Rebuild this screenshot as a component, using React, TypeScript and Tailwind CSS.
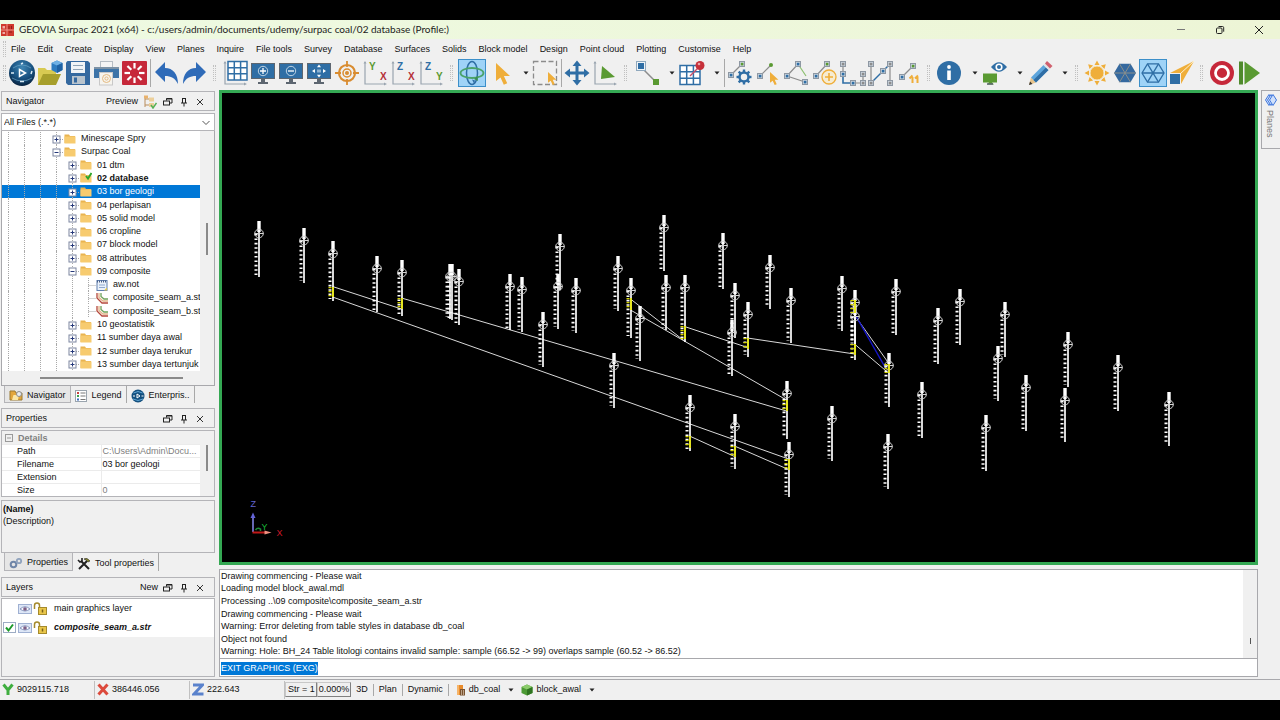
import { Fragment, type ReactNode } from "react";

const BLUE = "#2f6ea5";
const GREEN = "#5a9a32";
const GOLD = "#efae3a";
const GREY = "#8c8c8c";

const Icon = ({ children }: { children: ReactNode }) => (
  <svg viewBox="0 0 28 28" className="h-7 w-7 shrink-0" fill="none">
    {children}
  </svg>
);

const Node = ({ x, y, color = BLUE }: { x: number; y: number; color?: string }) => (
  <>
    <rect x={x - 2.5} y={y - 2.5} width="5" height="5" fill="#c9d3dc" stroke="#8e98a3" />
    <rect x={x - 1.2} y={y - 1.2} width="2.6" height="2.6" fill={color} />
  </>
);

const Cursor = ({ x, y, s = 1 }: { x: number; y: number; s?: number }) => (
  <path
    transform={`translate(${x} ${y}) scale(${s})`}
    d="M0 0v18l4.5-3.6 3.3 7.4 3.4-1.5-3.3-7.2H14z"
    fill={GOLD}
  />
);

const Axes = () => (
  <>
    <path d="M4 3v22h20" stroke="#9aa5b0" strokeWidth="1.2" />
    <path d="M2.5 4.5L4 2l1.5 2.5zM23 23.5l3 1.5-3 1.5z" fill="#9aa5b0" />
  </>
);

const AxisPair = ({ a, ac, b, bc }: { a: string; ac: string; b: string; bc: string }) => (
  <Icon>
    <Axes />
    <text x="8" y="11" fontSize="10" fontWeight="bold" fill={ac}>{a}</text>
    <text x="19" y="21" fontSize="10" fontWeight="bold" fill={bc}>{b}</text>
  </Icon>
);

const Monitor = ({ children }: { children: ReactNode }) => (
  <Icon>
    <rect x="2.5" y="4.5" width="23" height="15" fill={BLUE} stroke="#5d6670" />
    <path d="M12 20h4v3h3v2H9v-2h3z" fill="#5d6670" />
    {children}
  </Icon>
);

const HEX = "M3 14L8.500 4.800H19.500L25 14 19.500 23.200H8.500z";
const SPOKES = "M3 14H25M8.500 4.800L19.500 23.200M19.500 4.800L8.500 23.200";
const ANGLES = [0, 45, 90, 135, 180, 225, 270, 315];

const icons: Record<string, ReactNode> = {
  Start: (
    <Icon>
      <defs>
        <radialGradient id="globe" cx="0.5" cy="0.3" r="0.7">
          <stop offset="0" stopColor="#3f86b4" />
          <stop offset="0.6" stopColor="#17507f" />
          <stop offset="1" stopColor="#08233f" />
        </radialGradient>
      </defs>
      <circle cx="14" cy="14" r="13" fill="url(#globe)" />
      <path d="M5 9q9-6 18 0M4 19q10 6 20 0" stroke="#6ba6c9" strokeWidth="0.7" />
      <path d="M11.500 10.500l6 3.500-6 3.500z" stroke="#fff" strokeWidth="1.5" />
      <path d="M3 14h3M23 15l1-3M13 5l2-1M12 22.500h4" stroke="#dcecf5" strokeWidth="1.5" />
    </Icon>
  ),
  Open: (
    <Icon>
      <path d="M2 26V9h7l2 2h9v15z" fill="#d8ca52" />
      <path d="M2 26l5-11h18l-5 11z" fill="#a79f2c" />
      <path d="M21 1.500l5.500 2.500v7L21 14l-5.500-3V4z" fill="#2f7cc0" />
      <path d="M15.500 4L21 6.500 26.500 4 21 1.500z" fill="#6fb0e4" />
      <path d="M21 6.500V14l5.500-3V4z" fill="#1f62a4" />
    </Icon>
  ),
  Save: (
    <Icon>
      <path d="M2 3.500L3.500 2H24l2 2v22H4l-2-2z" fill="#35699f" />
      <rect x="7" y="3" width="14" height="11" fill="#f1f4f6" />
      <path d="M9 6.500h10M9 10.500h10" stroke="#8fa3b5" />
      <rect x="8" y="17" width="13" height="8" fill="#b9c4cd" />
      <rect x="10" y="18.500" width="3" height="5" fill="#35699f" />
    </Icon>
  ),
  Print: (
    <Icon>
      <rect x="8.500" y="2.500" width="12" height="7" fill="#f4f4f4" stroke="#b5bcc3" />
      <path d="M2 9h25v10H2z" fill="#3d74a8" />
      <path d="M2 8h25v2H2z" fill="#7d92a5" />
      <rect x="7.500" y="13.500" width="13" height="12.500" fill="#f6f4ee" stroke="#c8c8c8" />
      <circle cx="14.500" cy="19.500" r="4" stroke="#e3b980" />
      <circle cx="14.500" cy="19.500" r="1.600" stroke="#e3b980" />
    </Icon>
  ),
  Reset: (
    <Icon>
      <rect x="2" y="2" width="25" height="24" rx="1" fill="#c6283a" />
      {ANGLES.map((a) => (
        <path key={a} d="M14.500 9.500V4" transform={`rotate(${a} 14.500 14)`} stroke="#fff" strokeWidth="2.2" />
      ))}
    </Icon>
  ),
  Undo: (
    <Icon>
      <path d="M3 13L13 3v6c8 0 13 6 13 16-3-6-7-8-13-8v6z" fill="#2f6bb8" />
    </Icon>
  ),
  Redo: (
    <Icon>
      <path d="M26 13L16 3v6C8 9 3 15 3 25c3-6 7-8 13-8v6z" fill="#2f6bb8" />
    </Icon>
  ),
  "Toggle grid": (
    <Icon>
      <Axes />
      <rect x="7" y="2.500" width="19" height="18.500" fill="#fff" stroke={BLUE} strokeWidth="1.5" />
      <path d="M13.300 2v19M19.600 2v19M7 8.700h19M7 14.800h19" stroke={BLUE} strokeWidth="1.5" />
    </Icon>
  ),
  "Zoom in": (
    <Monitor>
      <circle cx="14" cy="12" r="4.700" stroke="#bcd2e4" />
      <path d="M14 9v6M11 12h6" stroke="#fff" strokeWidth="1.3" />
    </Monitor>
  ),
  "Zoom out": (
    <Monitor>
      <circle cx="14" cy="12" r="4.700" stroke="#bcd2e4" />
      <path d="M11 12h6" stroke="#fff" strokeWidth="1.3" />
    </Monitor>
  ),
  "Zoom all": (
    <Monitor>
      <path d="M14 5.500l2 2.700h-4zM14 18.500l2-2.700h-4zM7 12l3-2v4zM21 12l-3-2v4z" fill="#fff" />
      <rect x="12" y="10.500" width="4" height="3" fill="#8fb3d1" />
    </Monitor>
  ),
  Centre: (
    <Icon>
      <circle cx="14" cy="14" r="8" stroke="#d98c30" strokeWidth="2.2" />
      <circle cx="14" cy="14" r="4" stroke="#d98c30" strokeWidth="1.500" />
      <circle cx="14" cy="14" r="2" fill="#d98c30" />
      <path d="M14 2v6M14 20v6M2 14h6M20 14h6" stroke="#d98c30" strokeWidth="1.8" />
    </Icon>
  ),
  "Plan view": <AxisPair a="Y" ac={GREEN} b="X" bc="#b5303a" />,
  "Section view": <AxisPair a="Z" ac={BLUE} b="X" bc="#b5303a" />,
  "Long section view": <AxisPair a="Z" ac={BLUE} b="Y" bc={GREEN} />,
  Orbit: (
    <Icon>
      <ellipse cx="14" cy="14" rx="5.500" ry="11.500" stroke={BLUE} strokeWidth="1.5" />
      <ellipse cx="14" cy="14" rx="11.500" ry="5" stroke="#4ba36a" strokeWidth="1.8" />
      <path d="M19.500 17l-3.500 3 4 2z" fill="#3b8f52" />
      <path d="M14 20.500l3 1-1 3z" fill={BLUE} />
    </Icon>
  ),
  Select: (
    <Icon>
      <Cursor x={10} y={4} />
    </Icon>
  ),
  "Box select": (
    <Icon>
      <rect x="2.500" y="2.500" width="23" height="23" stroke={GREY} strokeWidth="1.300" strokeDasharray="5 2.500" />
      <Cursor x={17} y={13} s={0.6} />
    </Icon>
  ),
  Pan: (
    <Icon>
      <path
        d="M14 1.500l4.500 5.500h-3v5.500H21v-3l5.500 4.500-5.500 4.500v-3h-5.500V21h3L14 26.500 9.500 21h3v-5.500H7v3L1.500 14 7 9.500v3h5.500V7h-3z"
        fill={BLUE}
      />
    </Icon>
  ),
  Snap: (
    <Icon>
      <Axes />
      <path d="M11 7l13 11-14 2z" fill={GREEN} />
    </Icon>
  ),
  Digitise: (
    <Icon>
      <path d="M12 11l12 12" stroke={GREY} strokeWidth="1.5" />
      <rect x="4.500" y="2.500" width="9" height="9" fill="#eef4f8" stroke="#8fa8bd" />
      <rect x="6" y="4" width="6" height="6" fill={BLUE} />
      <rect x="21" y="20" width="6" height="6" fill={GREEN} />
    </Icon>
  ),
  "Pin grid": (
    <Icon>
      <rect x="3" y="6.500" width="20" height="19" fill="#fff" stroke={BLUE} strokeWidth="1.5" />
      <path d="M9.700 6v20M16.400 6v20M3 12.800h20M3 19.200h20" stroke={BLUE} strokeWidth="1.5" />
      <path d="M13 17l8-8" stroke="#c94d68" strokeWidth="1.5" />
      <circle cx="23" cy="6.500" r="4.500" fill="#c6303a" />
      <circle cx="22" cy="5" r="1.300" fill="#eaa0a5" />
    </Icon>
  ),
  "Line properties": (
    <Icon>
      <path d="M5 16L16 5" stroke={GREY} strokeWidth="1.200" />
      <Node x={5} y={16} />
      <Node x={16} y={5} color={GREEN} />
      <circle cx="18" cy="18" r="4.500" stroke={BLUE} strokeWidth="2.500" />
      {ANGLES.map((a) => (
        <path key={a} d="M18 13V10.500" transform={`rotate(${a} 18 18)`} stroke={BLUE} strokeWidth="2.400" />
      ))}
    </Icon>
  ),
  "Select point": (
    <Icon>
      <path d="M6 17L17 6" stroke={GREY} strokeWidth="1.200" />
      <Node x={6} y={17} />
      <circle cx="17" cy="6" r="2" fill={GREEN} />
      <Cursor x={16} y={13} s={0.6} />
    </Icon>
  ),
  "Close line": (
    <Icon>
      <path d="M23 23L5 17 16 5" stroke={GREY} strokeWidth="1.200" />
      <path d="M16 5l8 12" stroke="#8cc070" strokeWidth="1.200" />
      <Node x={16} y={5} />
      <Node x={5} y={17} />
      <Node x={23} y={23} />
    </Icon>
  ),
  "Add point": (
    <Icon>
      <path d="M6 17L17 5" stroke={GREY} strokeWidth="1.200" />
      <Node x={6} y={17} />
      <Node x={17} y={5} color={GREEN} />
      <circle cx="19" cy="18" r="7" fill="#f6ecd2" stroke={GOLD} strokeWidth="1.300" />
      <path d="M19 14v8M15 18h8" stroke={GOLD} strokeWidth="1.600" />
    </Icon>
  ),
  "Join segment": (
    <Icon>
      <path d="M5 5v10M15 24h10v-9" stroke={GREY} strokeWidth="1.200" />
      <path d="M5 15v9h10" stroke={BLUE} strokeWidth="1.600" />
      <Node x={5} y={5} color={GREY} />
      <Node x={5} y={15} />
      <Node x={15} y={24} />
      <Node x={25} y={24} color={GREY} />
      <Node x={25} y={15} color={GREY} />
    </Icon>
  ),
  "Break segment": (
    <Icon>
      <path d="M5 5v19M24 5v19" stroke={GREY} strokeWidth="1.200" />
      <path d="M5 24L24 5" stroke={BLUE} strokeWidth="1.500" />
      <Node x={5} y={5} color={GREY} />
      <Node x={5} y={24} color={GREY} />
      <Node x={17} y={12} />
      <Node x={24} y={5} color={GREY} />
      <Node x={24} y={24} color={GREY} />
    </Icon>
  ),
  Renumber: (
    <Icon>
      <path d="M8 18L19 7" stroke={GREY} strokeWidth="1.200" />
      <Node x={8} y={18} />
      <Node x={19} y={7} color={GREEN} />
      <path d="M18.500 24v-6M15.500 19.500l3-3M23.500 24v-6M21 19.500l3-3" stroke={GOLD} strokeWidth="2" />
    </Icon>
  ),
  Information: (
    <Icon>
      <circle cx="14" cy="14" r="12" fill={BLUE} />
      <circle cx="14" cy="8" r="1.900" fill="#fff" />
      <path d="M12.200 11.500h3.600V21h-3.600z" fill="#fff" />
    </Icon>
  ),
  "Display settings": (
    <Icon>
      <path d="M3 14.500h14v9h-5l2 2H7l2-2H3z" fill={GREEN} />
      <path d="M7 25h6" stroke="#5d6670" strokeWidth="1.500" />
      <path d="M11 8q8-9.500 16 0-8 9.500-16 0z" fill={BLUE} />
      <circle cx="19" cy="8" r="3.600" fill="#fff" />
      <circle cx="19" cy="8" r="2" fill={BLUE} />
    </Icon>
  ),
  Edit: (
    <Icon>
      <path d="M4 26l2-7.500 5 5z" fill="#e8c48c" />
      <path d="M4 26l1-3.500 2.500 2.500z" fill="#333" />
      <path d="M6 18.500L18.500 6l5 5L11 23.500z" fill="#5da5dc" />
      <path d="M8.500 21L21 8.500l2.500 2.500L11 23.500z" fill="#2f6ea5" />
      <path d="M18.500 6l1.500-1.500 5 5L23.500 11z" fill="#dfe3e6" />
      <path d="M20 4.500L22 2l5.500 5L25 9.500z" fill="#d0606e" />
    </Icon>
  ),
  Lighting: (
    <Icon>
      {ANGLES.map((a) => (
        <path key={a} d="M11.500 6L14 1.500 16.500 6z" transform={`rotate(${a} 14 14)`} fill={GOLD} />
      ))}
      <circle cx="14" cy="14" r="7" fill={GOLD} stroke="#f6e7c0" />
    </Icon>
  ),
  "Shaded faces": (
    <Icon>
      <path d={HEX} fill="#35699f" />
      <path d={SPOKES} stroke="#8a8f8c" />
    </Icon>
  ),
  "Wireframe faces": (
    <Icon>
      <path d={HEX} stroke={BLUE} strokeWidth="1.300" />
      <path d={SPOKES} stroke={BLUE} strokeWidth="1.300" />
    </Icon>
  ),
  Perspective: (
    <Icon>
      <path d="M3 14L27 2 14 25z" fill={GOLD} />
      <path d="M13 15L27 2" stroke="#fff3d0" />
      <rect x="2.500" y="14.500" width="11" height="11" fill="#2f6ea5" stroke="#f0f0f0" />
    </Icon>
  ),
  "Record macro": (
    <Icon>
      <circle cx="14" cy="14" r="12" fill="#c6283a" />
      <circle cx="14" cy="14" r="6.500" stroke="#fff" strokeWidth="2.800" />
    </Icon>
  ),
  "Run macro": (
    <Icon>
      <path d="M3 2.500h4v23H3z" fill="#4f8a2c" />
      <path d="M8.500 2.500L24 14 8.500 25.500z" fill={GREEN} />
    </Icon>
  ),
};

const toolbar = [
  "Start", "Open", "Save", "Print", "Reset", "|", "Undo", "Redo", ":",
  "Toggle grid", "Zoom in", "Zoom out", "Zoom all", "Centre", "Plan view", "Section view", "Long section view", ":",
  "Orbit", "Select", "v", "Box select", "|", "Pan", "Snap", ":",
  "Digitise", "v", "Pin grid", "v", "|",
  "Line properties", "Select point", "Close line", "Add point", "Join segment", "Break segment", "Renumber", ":",
  "Information", "v", "Display settings", "v", "Edit", "v", ":",
  "Lighting", "Shaded faces", "Wireframe faces", "Perspective", ":",
  "Record macro", "Run macro",
];

const Grip = () => <span className="h-4 w-[3px] border-x border-dotted border-[#c0c0c0]" />;

const Caret = () => (
  <svg viewBox="0 0 6 4" className="h-1 w-1.5" fill="#222">
    <path d="M0.500 0.500h5L3 3.500z" />
  </svg>
);

const Toolbar = () => (
  <div className="flex h-[31px] items-start">
    <span className="flex h-7 w-2 shrink-0 items-center justify-center">
      <Grip />
    </span>
    {toolbar.map((name, i) => {
      if (name === "|")
        return (
          <span key={i} className="flex h-7 w-1 shrink-0 justify-center">
            <span className="w-px bg-[#a8a8a8]" />
          </span>
        );
      if (name === ":")
        return (
          <span key={i} className="flex h-7 w-[13px] shrink-0 items-center justify-center">
            <Grip />
          </span>
        );
      if (name === "v")
        return (
          <button key={i} aria-label="More options" className="flex h-7 w-[17px] shrink-0 items-center justify-end pr-0.5">
            <Caret />
          </button>
        );
      const active = name === "Orbit" || name === "Wireframe faces";
      return (
        <button
          key={i}
          aria-label={name}
          className={active ? "h-7 w-7 shrink-0 bg-[#9fd3f7] outline outline-[#3c8fc9] -outline-offset-1" : "h-7 w-7 shrink-0"}
        >
          {icons[name]}
        </button>
      );
    })}
  </div>
);

const menus = [
  "File", "Edit", "Create", "Display", "View", "Planes", "Inquire", "File tools", "Survey", "Database",
  "Surfaces", "Solids", "Block model", "Design", "Point cloud", "Plotting", "Customise", "Help",
];

const TitleBar = () => (
  <header className="flex h-[19px] shrink-0 items-center bg-linear-to-r from-[#eefae2] to-[#edf5d6]">
    <svg viewBox="0 0 14 14" className="h-3.5 w-3.5">
      <rect x="1" y="1" width="13" height="12" fill="#cf3a2c" />
      <path d="M7 1v12M1 7h13" stroke="#f3a79c" strokeWidth="0.800" />
      <path d="M2.500 3h2.500v2.500H2.500zM2.500 9h2.500v2H2.500z" fill="#f0aea4" />
      <path d="M9 3v3M11.500 3v3M9 9h3" stroke="#8e2018" />
    </svg>
    <h1 className="ml-[5px] font-[Lato,sans-serif] text-[10px] text-[#222]">
      GEOVIA Surpac 2021 (x64) - c:/users/admin/documents/udemy/surpac coal/02 database (Profile:)
    </h1>
    <div className="ml-auto flex pr-[2px]">
      <button aria-label="Minimise" className="flex w-[39px] justify-center">
        <svg viewBox="0 0 10 10" className="h-2.5 w-2.5" stroke="#777" fill="none">
          <path d="M1 4.500h8" />
        </svg>
      </button>
      <button aria-label="Restore" className="flex w-[39px] justify-center">
        <svg viewBox="0 0 10 10" className="h-2.5 w-2.5" stroke="#222" fill="none">
          <rect x="1.500" y="3" width="5.500" height="5.500" rx="1" />
          <path d="M3.500 1.500h4a1.200 1.200 0 0 1 1.200 1.200v4" />
        </svg>
      </button>
      <button aria-label="Close" className="flex w-[39px] justify-center">
        <svg viewBox="0 0 10 10" className="h-2.5 w-2.5" stroke="#222" fill="none">
          <path d="M1 1l8 8M9 1L1 9" />
        </svg>
      </button>
    </div>
  </header>
);

const PanelHeader = ({ title, children }: { title: string; children?: ReactNode }) => (
  <div className="flex h-5 shrink-0 items-center border border-[#b4b4b8] pt-px pr-1.5 pl-1">
    <h2 className="mr-auto">{title}</h2>
    {children}
    <button aria-label={`Float ${title}`} className="ml-0.5 flex w-4 justify-center">
      <svg viewBox="0 0 10 10" className="h-2.5 w-2.5" stroke="#222" fill="none">
        <path d="M3.500 3.500v-2H9V6H7M3.500 2h5.500" />
        <rect x="0.500" y="4" width="6" height="4" />
      </svg>
    </button>
    <button aria-label={`Pin ${title}`} className="flex w-4 justify-center">
      <svg viewBox="0 0 10 10" className="h-2.5 w-2.5" stroke="#222" fill="none">
        <path d="M3 1.500h4M3.500 1.500V6M6.500 1.500V6M2 6h6M5 6v3.500" />
      </svg>
    </button>
    <button aria-label={`Close ${title}`} className="flex w-4 justify-center">
      <svg viewBox="0 0 10 10" className="h-2.5 w-2.5" stroke="#333" fill="none">
        <path d="M2 2l6 6M8 2L2 8" />
      </svg>
    </button>
  </div>
);

type TreeItem = { name: string; depth: number; kind: string };

const tree: TreeItem[] = [
  { name: "Minescape Spry", depth: 3, kind: "closed" },
  { name: "Surpac Coal", depth: 3, kind: "open" },
  { name: "01 dtm", depth: 4, kind: "closed" },
  { name: "02 database", depth: 4, kind: "current" },
  { name: "03 bor geologi", depth: 4, kind: "closed" },
  { name: "04 perlapisan", depth: 4, kind: "closed" },
  { name: "05 solid model", depth: 4, kind: "closed" },
  { name: "06 cropline", depth: 4, kind: "closed" },
  { name: "07 block model", depth: 4, kind: "closed" },
  { name: "08 attributes", depth: 4, kind: "closed" },
  { name: "09 composite", depth: 4, kind: "open" },
  { name: "aw.not", depth: 5, kind: "note" },
  { name: "composite_seam_a.st", depth: 5, kind: "string" },
  { name: "composite_seam_b.st", depth: 5, kind: "string" },
  { name: "10 geostatistik", depth: 4, kind: "closed" },
  { name: "11 sumber daya awal", depth: 4, kind: "closed" },
  { name: "12 sumber daya terukur", depth: 4, kind: "closed" },
  { name: "13 sumber daya tertunjuk", depth: 4, kind: "closed" },
];

const FileIcon = ({ kind }: { kind: string }) => {
  if (kind === "note")
    return (
      <svg viewBox="0 0 12 12" className="h-3 w-3 shrink-0">
        <rect x="1" y="1.500" width="10" height="10" fill="#eaf1fa" stroke="#5f7fae" />
        <path d="M1 2.500h10" stroke="#4a5f86" strokeWidth="2" strokeDasharray="1 1" />
        <path d="M3 6h6M3 8.500h6" stroke="#8ea9d0" />
        <path d="M8 11.500l3-3v3z" fill="#e6c84a" />
      </svg>
    );
  if (kind === "string")
    return (
      <svg viewBox="0 0 12 12" className="h-3 w-3 shrink-0" fill="none">
        <path d="M1 1v5l5 5h6" stroke="#b5483c" strokeWidth="1.300" />
        <path d="M3 1v4.500l4 3.500h5" stroke="#e2b48a" strokeWidth="1.300" />
        <path d="M5 1v3.500L8 7h4" stroke="#6ea35a" strokeWidth="1.300" />
      </svg>
    );
  return (
    <svg viewBox="0 0 12 12" className="h-3 w-3 shrink-0">
      <path d="M0.500 1.500h4.500l1 1.500h5V10H0.500z" fill="#e9b450" />
      <path d="M0.500 3.500h11v7h-11z" fill="#f7cb6f" />
      {kind === "current" && <path d="M6 4l2 2.500L11.500 1" stroke="#2ca62c" strokeWidth="2" fill="none" />}
    </svg>
  );
};

const TreeRow = ({ item }: { item: TreeItem }) => {
  const selected = item.name === "03 bor geologi";
  return (
    <li
      className={
        selected
          ? "flex items-center overflow-hidden bg-[#0078d7] pl-1.5 text-white"
          : "flex items-center overflow-hidden pl-1.5"
      }
    >
      {Array.from({ length: item.depth }, (_, i) => (
        <span key={i} className="h-full w-4 shrink-0 border-l border-dotted border-[#a9a9a9]" />
      ))}
      <svg viewBox="0 0 14 14" className="-ml-1.5 h-3.5 w-3.5 shrink-0" fill="none">
        {item.depth === 5 ? (
          <path d="M6.500 0v14M6.500 7.500H14" stroke="#a9a9a9" strokeDasharray="1 1" />
        ) : (
          <>
            <path d="M6.500 0v14M10 7.500h4" stroke="#a9a9a9" strokeDasharray="1 1" />
            <rect x="3" y="4" width="7" height="7" fill="#fff" stroke="#7d86a0" />
            <path d={item.kind === "open" ? "M4.500 7.500h4" : "M4.500 7.500h4M6.500 5.500v4"} stroke="#26397a" />
          </>
        )}
      </svg>
      <FileIcon kind={item.kind} />
      <span className={item.kind === "current" ? "ml-[5px] font-bold whitespace-nowrap" : "ml-[5px] whitespace-nowrap"}>
        {item.name}
      </span>
    </li>
  );
};

const Tab = ({ label, active, children }: { label: string; active?: boolean; children: ReactNode }) => (
  <button
    className={
      active
        ? "flex h-full items-center gap-1 border border-t-0 border-[#b4b4b8] bg-[#e6e6e6] px-1 pt-0.5"
        : "flex h-full items-center gap-1 border-r border-[#a8a8a8] px-1 pt-0.5"
    }
  >
    {children}
    {label}
  </button>
);

const NavigatorPanel = () => (
  <section className="flex min-h-0 flex-1 flex-col">
    <PanelHeader title="Navigator">
      <label htmlFor="preview">Preview</label>
      <button id="preview" className="ml-1 flex w-4 justify-center">
        <svg viewBox="0 0 14 14" className="h-3.5 w-3.5" fill="none">
          <path d="M2 1v11M2 4h4M2 10h4" stroke="#b98d5d" />
          <rect x="1" y="0.500" width="4" height="3" fill="#e9b26c" />
          <rect x="6" y="2.500" width="5" height="4" fill="#eccf9a" />
          <rect x="6" y="8" width="5" height="4" fill="#eccf9a" />
          <path d="M8 10l2 3 3.500-5" stroke="#55b055" strokeWidth="1.500" />
        </svg>
      </button>
    </PanelHeader>
    <div className="relative mt-0.5 h-[18px] shrink-0 border border-[#b4b4b8] bg-white">
      <select aria-label="File filter" className="h-full w-full appearance-none pl-0.5">
        <option>All Files (.*.*)</option>
      </select>
      <svg viewBox="0 0 8 6" className="pointer-events-none absolute top-1.5 right-1 h-1.5 w-2" fill="none" stroke="#555">
        <path d="M0.500 1L4 4.500 7.500 1" />
      </svg>
    </div>
    <div className="flex min-h-0 flex-1 flex-col border border-t-0 border-[#a8a8ac]">
      <div className="flex min-h-0 flex-1">
        <ul className="grid min-w-0 flex-1 auto-rows-fr bg-white pt-px">
          {tree.map((item) => (
            <TreeRow key={item.name} item={item} />
          ))}
        </ul>
        <div className="flex w-3.5 justify-center pt-[92px]">
          <span className="h-8 w-0.5 bg-[#8a8a8a]" />
        </div>
      </div>
      <div className="flex h-3.5 shrink-0 items-center pl-[38px]">
        <span className="h-0.5 w-[143px] bg-[#8a8a8a]" />
      </div>
    </div>
    <div className="flex h-[17px] shrink-0 items-center pl-[3px]">
      <Tab label="Navigator" active>
        <svg viewBox="0 0 14 12" className="h-3 w-3.5">
          <path d="M1 2h5l1 2h6v7H1z" fill="#e2a63c" stroke="#9b7a32" />
          <path d="M3 11l1.500-5H10l-1 5z" fill="#fbe7a5" />
          <circle cx="10" cy="5" r="2.500" fill="#e9edf0" stroke="#8d8d8d" />
        </svg>
      </Tab>
      <Tab label="Legend">
        <svg viewBox="0 0 13 12" className="h-3 w-[13px]">
          <rect x="0.500" y="0.500" width="11" height="11" fill="#fff" stroke="#9aa4ae" />
          <path d="M2 3h2" stroke="#c84040" strokeWidth="2" />
          <path d="M2 6h2" stroke="#3aa04a" strokeWidth="2" />
          <path d="M2 9.500h2" stroke="#3a6ac0" strokeWidth="2" />
          <path d="M5.500 3h5M5.500 6h5M5.500 9.500h5" stroke="#777" />
        </svg>
      </Tab>
      <Tab label="Enterpris..">
        <svg viewBox="0 0 14 14" className="h-3.5 w-3.5" fill="none">
          <circle cx="7" cy="7" r="6.500" fill="#14507f" />
          <path d="M2.500 4q4.500-3 9 0M2 10q5 3 10 0" stroke="#62a7d6" />
          <path d="M6 5l3 2-3 2zM2 7h2M10.500 7h2" stroke="#fff" />
        </svg>
      </Tab>
    </div>
  </section>
);

const properties = [
  { name: "Path", value: "C:\\Users\\Admin\\Docu...", muted: true },
  { name: "Filename", value: "03 bor geologi", muted: false },
  { name: "Extension", value: "", muted: false },
  { name: "Size", value: "0", muted: true },
];

const PropertiesPanel = () => (
  <section className="mt-[5px] shrink-0">
    <PanelHeader title="Properties" />
    <div className="mt-0.5 flex h-[67px] overflow-hidden border border-[#b4b4b8]">
      <table className="h-[65px] flex-1 table-fixed border-collapse text-left leading-[12px]">
        <thead>
          <tr>
            <th colSpan={2} className="p-0 pt-px font-bold text-[#808080]">
              <span className="flex items-center gap-[5px] pl-[3px]">
                <svg viewBox="0 0 8 8" className="h-2 w-2" fill="none" stroke="#9a9a9a">
                  <rect x="0.500" y="0.500" width="7" height="7" />
                  <path d="M2 4h4" />
                </svg>
                Details
              </span>
            </th>
          </tr>
        </thead>
        <tbody>
          {properties.map((row) => (
            <tr key={row.name} className="bg-white">
              <th scope="row" className="w-[99px] border-t border-r border-[#ebebeb] p-0 pl-[15px] font-normal">{row.name}</th>
              <td className={row.muted ? "border-t border-[#ebebeb] p-0 pl-px text-[#808080]" : "border-t border-[#ebebeb] p-0 pl-px"}>
                {row.value}
              </td>
            </tr>
          ))}
        </tbody>
      </table>
      <div className="flex w-3.5 justify-center pt-3.5">
        <span className="h-[26px] w-0.5 bg-[#8a8a8a]" />
      </div>
    </div>
    <div className="mt-[3px] h-[53px] border border-[#b4b4b8] pt-0.5 pl-px leading-[12px]">
      <p className="font-bold">(Name)</p>
      <p>(Description)</p>
    </div>
    <div className="flex h-[18px] items-center pl-[3px]">
      <Tab label="Properties" active>
        <svg viewBox="0 0 14 12" className="h-3 w-3.5" fill="none">
          <circle cx="4.500" cy="7.500" r="2.800" stroke="#6f86a8" strokeWidth="2" />
          <circle cx="10" cy="4" r="2.200" stroke="#8fa2bd" strokeWidth="1.800" />
        </svg>
      </Tab>
      <Tab label="Tool properties">
        <svg viewBox="0 0 14 13" className="h-[13px] w-3.5" fill="none">
          <path d="M2 12l8-8M12 12L4 4" stroke="#222" strokeWidth="2" />
          <path d="M7 2q3-2 6 2l-2 1-2-2z" fill="#8a8a2c" stroke="#222" strokeWidth="0.600" />
          <path d="M1 3l2 2 2-1V1" stroke="#222" strokeWidth="1.600" />
        </svg>
      </Tab>
    </div>
  </section>
);

const layers = [
  { name: "main graphics layer", active: false },
  { name: "composite_seam_a.str", active: true },
];

const LayersPanel = () => (
  <section className="mt-[6px] shrink-0">
    <PanelHeader title="Layers">
      <button>New</button>
    </PanelHeader>
    <ul className="mt-px h-[79px] border border-[#b4b4b8]">
      {layers.map((layer) => (
        <li key={layer.name} className="flex h-[19px] items-center bg-white">
          <input
            type="checkbox"
            id={layer.name}
            defaultChecked={layer.active}
            className="peer sr-only"
          />
          <label htmlFor={layer.name} className="flex items-center">
            <svg viewBox="0 0 16 12" className="h-3 w-4" fill="none">
              {layer.active && (
                <>
                  <rect x="1.500" y="0.500" width="12" height="10" fill="#fff" stroke="#9dacc4" />
                  <path d="M4 5.500l2.500 3L11 2.500" stroke="#1d9a2a" strokeWidth="2" />
                </>
              )}
            </svg>
            <svg viewBox="0 0 14 10" className="h-2.5 w-3.5" fill="none">
              <rect x="0.500" y="0.500" width="13" height="9" fill="#dde6f6" stroke="#9fb0d2" />
              <path d="M2 5q5-4.500 10 0-5 4-10 0z" fill="#f7f7fb" stroke="#8796bd" />
              <circle cx="7" cy="5" r="1.800" fill="#7d5f86" />
            </svg>
            <svg viewBox="0 0 15 13" className="ml-px h-[13px] w-[15px]" fill="none">
              <path d="M1.500 7V3.500q0-2.500 2.500-2.500t2.500 2.500V6" stroke="#a58a2c" strokeWidth="1.500" />
              <rect x="5.500" y="5.500" width="8" height="7" fill="#e9c64a" stroke="#a58a2c" />
              <path d="M9.500 7.500v3" stroke="#7a611a" strokeWidth="1.500" />
            </svg>
            <span className={layer.active ? "ml-1.5 font-bold italic" : "ml-1.5"}>{layer.name}</span>
          </label>
        </li>
      ))}
    </ul>
  </section>
);

// [x, top of the collar bar, bottom of the trace]
const holes = [
  [259, 221, 277], [304, 228, 283], [333, 241, 301], [377, 256, 312], [402, 260, 316], [450, 264, 319],
  [452, 264, 320], [459, 269, 325], [510, 274, 330], [522, 277, 332], [543, 312, 367], [560, 234, 290],
  [558, 274, 329], [576, 278, 333], [618, 256, 311], [631, 278, 338], [640, 306, 361], [664, 215, 271],
  [666, 275, 330], [685, 275, 342], [723, 233, 289], [735, 283, 338], [732, 320, 376], [748, 302, 357],
  [770, 255, 309], [791, 288, 343], [842, 276, 331], [855, 290, 345], [855, 304, 360], [896, 279, 335],
  [889, 353, 407], [922, 382, 438], [614, 353, 408], [690, 395, 451], [735, 414, 469], [787, 381, 439],
  [789, 442, 497], [832, 406, 461], [888, 434, 489], [938, 308, 364], [960, 289, 345], [1005, 302, 357],
  [998, 346, 401], [1068, 332, 387], [1118, 355, 411], [1026, 375, 431], [1065, 388, 442], [1169, 392, 446],
  [986, 415, 471],
];

// [x, from, to] of the coal intersections
const seams = [
  [333, 287, 297], [402, 298, 309], [631, 298, 310], [685, 326, 339], [748, 338, 349], [855, 300, 313],
  [855, 344, 355], [889, 364, 373], [690, 436, 448], [735, 446, 457], [787, 400, 411], [789, 459, 470],
];

const contacts = [
  "M333 286.500L402 309", "M402 298L787 411", "M333 297L789 459", "M631 299L685 341", "M631 310L787 400",
  "M685 326.500L748 347.500", "M748 338L855 354", "M855 315L889 363", "M855 344L889 373", "M690 436L735 456.500",
  "M735 446L789 469.500",
];

const Viewport = () => (
  <div className="min-h-0 flex-1 border-[3px] border-[#34a853] bg-black">
    <svg viewBox="223 93 1032 469" className="h-full w-full" fill="none">
      {contacts.map((d) => (
        <path key={d} d={d} stroke="#d8d8d8" strokeWidth="1" />
      ))}
      <path d="M857 317L886 368" stroke="#1414c8" strokeWidth="1.500" />
      {holes.map(([x, top, bottom]) => (
        <Fragment key={`${x}-${top}`}>
          <path d={`M${x + 0.5} ${top}v11`} stroke="#fff" strokeWidth="3.400" />
          <path d={`M${x + 0.5} ${top + 10}V${bottom}`} stroke="#fff" strokeWidth="1.700" />
          <path d={`M${x - 2.5} ${top + 13}V${bottom - 2}`} stroke="#fff" strokeWidth="3" strokeDasharray="1.600 2.800" />
          <circle cx={x + 0.5} cy={top + 12.5} r="4.300" stroke="#d4d4d4" strokeWidth="1" />
          <path d={`M${x - 4} ${top + 12.5}h9`} stroke="#d4d4d4" strokeWidth="1" />
        </Fragment>
      ))}
      {seams.map(([x, from, to]) => (
        <Fragment key={`${x}-${from}`}>
          <path d={`M${x + 0.5} ${from}V${to}`} stroke="#e8e800" strokeWidth="1.700" />
          <path d={`M${x - 2.5} ${from}V${to}`} stroke="#d8d800" strokeWidth="3" strokeDasharray="1.300 2.700" />
        </Fragment>
      ))}
      <path d="M253.500 532V517" stroke="#8a8af0" strokeWidth="1.500" />
      <path d="M251 518l2.500-5.500 2.500 5.500z" fill="#6464d8" />
      <path d="M253 532.500h14" stroke="#c01818" strokeWidth="2" />
      <path d="M265 530.500l7 2-7 2z" fill="#f09080" />
      <path d="M256 530q2-3 5-1v2" stroke="#1c8a3a" strokeWidth="1.500" />
      <text x="251" y="507" fontSize="9" fill="#6464d0">Z</text>
      <text x="262" y="530" fontSize="9" fill="#18b838">Y</text>
      <text x="277" y="536" fontSize="9" fill="#d01828">X</text>
    </svg>
  </div>
);

const messages = [
  "Drawing commencing - Please wait",
  "Loading model block_awal.mdl",
  "Processing ..\\09 composite\\composite_seam_a.str",
  "Drawing commencing - Please wait",
  "Warning: Error deleting from table styles in database db_coal",
  "Object not found",
  "Warning: Hole: BH_24 Table litologi contains invalid sample: sample (66.52 -> 99) overlaps sample (60.52 -> 86.52)",
];

const MessagePanel = () => (
  <div className="mt-1 shrink-0">
    <div className="flex h-[90px] border border-[#a8a8ac] bg-white">
      <div className="grid flex-1 auto-rows-fr items-center pl-px">
        {messages.map((line, i) => (
          <p key={i}>{line}</p>
        ))}
      </div>
      <div className="flex w-3.5 items-end justify-center bg-[#f0f0f0] pb-3.5">
        <span className="h-1.5 w-px bg-[#555]" />
      </div>
    </div>
    <div className="flex h-[18px] items-center border border-t-0 border-[#a8a8ac] bg-white pt-px pl-px">
      <input
        aria-label="Command"
        defaultValue="EXIT GRAPHICS (EXG)"
        className="field-sizing-content h-[13px] bg-[#0078d7] text-white outline-none"
      />
    </div>
  </div>
);

const PlanesTab = () => (
  <aside className="w-[22px] shrink-0 pl-[3px]">
    <button className="flex h-[59px] w-full flex-col items-center gap-1 border border-r-0 border-[#a8a8ac] pt-[3px] text-[#777]">
      <svg viewBox="0 0 12 12" className="h-3 w-3" fill="#cfe0fb" stroke="#3f76dd">
        <path d="M4 0.500l3.500 5.500L4 11.500 0.500 6z" />
        <path d="M6 0.500l3.500 5.500L6 11.500 2.500 6z" />
        <path d="M8 0.500l3.500 5.500L8 11.500 4.500 6z" />
      </svg>
      <span className="pr-1 [writing-mode:vertical-rl]">Planes</span>
    </button>
  </aside>
);

const coords = [
  { axis: "Y", value: "9029115.718", color: "#3fae3f", d: "M1.500 1.500L6 7v5M10.500 1.500L6 7" },
  { axis: "X", value: "386446.056", color: "#dc4a3c", d: "M1.500 1.500l9 10M10.500 1.500l-9 10" },
  { axis: "Z", value: "222.643", color: "#5a82cc", d: "M1 2h9.500L2 11h9.500" },
];

const StatusBar = () => (
  <footer className="flex h-[21px] shrink-0 items-center border-t border-[#a8a8ac] pb-px">
    {coords.map((c) => (
      <div key={c.axis} className="flex h-[18px] w-[95px] items-center gap-[3px] border-r border-[#c0c0c0] pl-0.5">
        <svg viewBox="0 0 12 13" className="h-[13px] w-3" role="img" aria-label={c.axis}>
          <path d={c.d} stroke={c.color} strokeWidth="3" fill="none" />
        </svg>
        {c.value}
      </div>
    ))}
    <button className="h-[15px] border border-t-[#c8c8c8] border-r-[#808080] border-b-[#808080] border-l-[#c8c8c8] pr-px pl-0.5">Str = 1</button>
    <button className="h-[15px] border border-t-[#c8c8c8] border-r-[#808080] border-b-[#808080] border-l-[#c8c8c8] px-px">0.000%</button>
    <button className="h-3 border-r border-[#a8a8a8] px-[5px] leading-none">3D</button>
    <button className="h-3 border-r border-[#a8a8a8] px-[5px] leading-none">Plan</button>
    <button className="h-3 border-r border-[#a8a8a8] px-[5px] leading-none">Dynamic</button>
    <button className="ml-[7px] flex items-center">
      <svg viewBox="0 0 10 12" className="mr-[3px] h-3 w-2.5">
        <path d="M1 1h6v10H1z" fill="#e88a2a" />
        <path d="M1 1h2v10H1z" fill="#f6b468" />
        <path d="M4 5h5v6.500H4z" fill="#7a5330" />
        <path d="M5.500 6v5M7.500 6v5" stroke="#d8c6b0" strokeWidth="0.700" />
      </svg>
      db_coal
      <span className="ml-2">
        <Caret />
      </span>
    </button>
    <button className="ml-[7px] flex items-center">
      <svg viewBox="0 0 12 12" className="mr-[3px] h-3 w-3">
        <path d="M6 0.500l5.500 2.500v6L6 11.500 0.500 9V3z" fill="#4c9a34" />
        <path d="M6 0.500l5.500 2.500L6 5.500 0.500 3z" fill="#8ccc6c" />
        <path d="M6 5.500v6L11.500 9V3z" fill="#2f7420" />
      </svg>
      block_awal
      <span className="ml-2">
        <Caret />
      </span>
    </button>
  </footer>
);

export default function App() {
  return (
    <div className="flex h-screen flex-col bg-black py-5 font-['Liberation_Sans',Arial,sans-serif] text-[9px] leading-[13px] text-[#111]">
      <div className="flex min-h-0 flex-1 flex-col bg-[#f0f0f0]">
        <TitleBar />
        <div className="flex h-5 shrink-0 items-center pl-[3px]">
          <Grip />
          <nav className="flex gap-3 pl-[5px]">
            {menus.map((m) => (
              <button key={m}>{m}</button>
            ))}
          </nav>
        </div>
        <Toolbar />
        <main className="flex min-h-0 flex-1 pb-0.5">
          <div className="flex w-[215px] shrink-0 flex-col pt-px pl-px">
            <NavigatorPanel />
            <PropertiesPanel />
            <LayersPanel />
          </div>
          <div className="ml-1 flex min-w-0 flex-1 flex-col">
            <Viewport />
            <MessagePanel />
          </div>
          <PlanesTab />
        </main>
        <StatusBar />
      </div>
    </div>
  );
}
